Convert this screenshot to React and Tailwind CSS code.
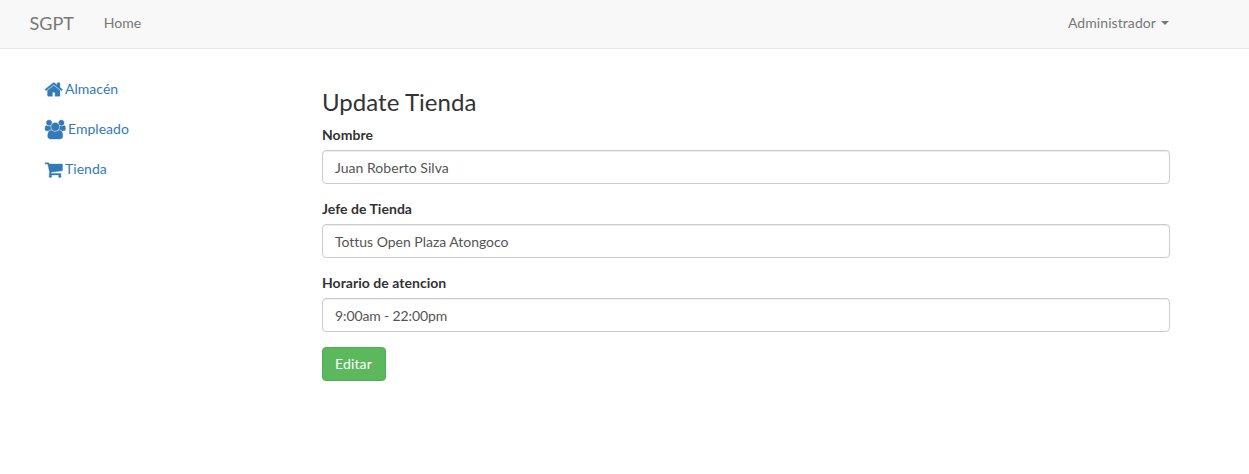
import React from "react";

const fields = [
  { label: "Nombre", value: "Juan Roberto Silva", tracking: "tracking-[0.03px]" },
  { label: "Jefe de Tienda", value: "Tottus Open Plaza Atongoco", tracking: "tracking-[-0.02px]" },
  { label: "Horario de atencion", value: "9:00am - 22:00pm", tracking: "tracking-[-0.12px]" },
];

// Glyph outlines on a 1792-unit grid, y axis pointing down
const homePath =
  "M1472 992v480q0 26-19 45t-45 19h-384v-384h-256v384h-384q-26 0-45-19t-19-45v-480q0-1 .5-3t.5-3l575-474 575 474q1 2 1 6zm223-69l-62 74q-8 9-21 11h-3q-13 0-21-7l-692-577-692 577q-12 8-24 7-13-2-21-11l-62-74q-8-10-7-23.500t11-21.500l719-599q32-26 76-26t76 26l244 204v-195q0-14 9-23t23-9h192q14 0 23 9t9 23v408l219 182q10 8 11 21.500t-7 23.500z";
const usersPath =
  "M593 896q-162 5-265 128h-134q-82 0-138-40.500t-56-118.500q0-353 124-353 6 0 43.500 21t97.500 42.500 119 21.500q67 0 133-23-5 37-5 66 0 139 81 256zm1071 637q0 120-73 189.500t-194 69.500h-874q-121 0-194-69.500t-73-189.500q0-53 3.500-103.500t14-109 26.500-108.500 43-97.500 62-81 85.500-53.500 111.500-20q10 0 43 21.500t73 48 107 48 135 21.500 135-21.500 107-48 73-48 43-21.500q61 0 111.500 20t85.500 53.500 62 81 43 97.500 26.500 108.500 14 109 3.500 103.500zm-1024-1277q0 106-75 181t-181 75-181-75-75-181 75-181 181-75 181 75 75 181zm704 384q0 159-112.500 271.500t-271.500 112.500-271.500-112.500-112.500-271.500 112.500-271.500 271.500-112.500 271.500 112.500 112.500 271.500zm576 225q0 78-56 118.500t-138 40.500h-134q-103-123-265-128 81-117 81-256 0-29-5-66 66 23 133 23 59 0 119-21.500t97.500-42.500 43.500-21q124 0 124 353zm-128-609q0 106-75 181t-181 75-181-75-75-181 75-181 181-75 181 75 75 181z";
const cartPath =
  "M704 1536q0 52-38 90t-90 38-90-38-38-90 38-90 90-38 90 38 38 90zm896 0q0 52-38 90t-90 38-90-38-38-90 38-90 90-38 90 38 38 90zm128-1088v512q0 24-16.500 42.500t-40.500 21.500l-1044 122q13 60 13 70 0 16-24 64h920q26 0 45 19t19 45-19 45-45 19h-1024q-26 0-45-19t-19-45q0-11 8-31.500t16-36 21.500-40 15.500-29.500l-177-823h-204q-26 0-45-19t-19-45 19-45 45-19h256q16 0 28.500 6.500t19.500 15.500 13 24.500 8 26 5.500 29.500 4.500 26h1201q26 0 45 19t19 45z";

const links = [
  { name: "Almacén", path: homePath, box: "80 0 1632 1792", size: "w-[17.500px] h-[19px]" },
  { name: "Empleado", path: usersPath, box: "0 0 1920 1792", size: "w-[20.500px] h-[19px]" },
  { name: "Tienda", path: cartPath, box: "64 0 1664 1792", size: "w-[17.500px] h-[19px]" },
];

export default function App() {
  return (
    <div className="min-h-[474px] bg-white font-['Lato',sans-serif] text-[14px] leading-5 text-[#333] [font-variant-ligatures:none]">
      <nav className="flex h-[49px] items-start border-b border-[#e7e7e7] bg-[#f8f8f8] pr-20 pl-[29.500px] text-[#777]">
        <a className="pt-[13px] text-[18px]">SGPT</a>
        <a className="ml-[30px] pt-[13px]">Home</a>
        <a className="ml-auto flex items-center pt-[13px]">
          <span className="tracking-[0.07px]">Administrador</span>
          <span className="ml-[5px] border-x-4 border-t-4 border-x-transparent border-t-[#777]" />
        </a>
      </nav>
      <div className="flex pr-[79px]">
        <ul className="w-[322px] shrink-0 pt-[30px] pl-[44.500px]">
          {links.map((link) => (
            <li key={link.name} className="mb-5 flex h-5 items-center gap-[3px] text-[#337ab7]">
              <svg
                viewBox={link.box}
                className={`overflow-visible ${link.size}`}
                fill="currentColor"
                stroke="currentColor"
                strokeWidth="36"
                preserveAspectRatio="none"
              >
                <path d={link.path} />
              </svg>
              <a className="tracking-[0.03px]">{link.name}</a>
            </li>
          ))}
        </ul>
        <form className="grow pt-10">
          <h3 className="mb-[10px] text-[24px] leading-[26px] font-normal tracking-[0.04px]">Update Tienda</h3>
          {fields.map((field) => (
            <div key={field.label} className="mb-[15px]">
              <label className="mb-[5px] block font-bold tracking-[0.03px]">{field.label}</label>
              <input
                defaultValue={field.value}
                className={`block h-[34px] w-full rounded-[4px] border border-[#ccc] bg-white px-3 py-1.5 text-[#555] shadow-[inset_0_1px_1px_rgba(0,0,0,0.075)] ${field.tracking}`}
              />
            </div>
          ))}
          <button
            type="button"
            className="h-[34px] w-16 rounded-[4px] border border-[#4cae4c] bg-[#5cb85c] pl-3 text-left tracking-[0.15px] text-white"
          >
            Editar
          </button>
        </form>
      </div>
    </div>
  );
}
